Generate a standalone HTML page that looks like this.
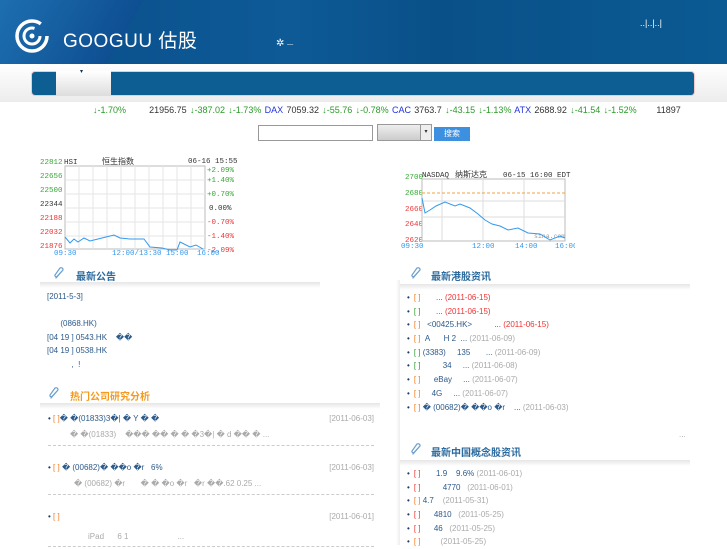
<!DOCTYPE html>
<html><head><meta charset="utf-8"><style>
*{margin:0;padding:0;box-sizing:border-box}
body{width:727px;height:545px;overflow:hidden;background:#fff;font-family:"Liberation Sans","Noto Sans CJK SC",sans-serif;font-size:8px;color:#333;position:relative}
.a{position:absolute;white-space:nowrap}
.hdr{left:0;top:0;width:727px;height:64px;background:linear-gradient(90deg,#0a4e8a 0%,#0d5a97 40%,#0a5088 60%,#0b5a93 100%)}
.sw{left:0;top:0;width:200px;height:64px;background:linear-gradient(120deg,#1d6fb0 0%,#0e4f92 60%,transparent 61%)}
.g{color:#2a9a2a}.r{color:#e33}.b{color:#2233dd}.o{color:#f07a1a}.gr{color:#aaa}.bl{color:#2c5a8a}
.sec{font-size:10px;font-weight:bold;color:#2b6a9e}
.shadow{height:6px;background:linear-gradient(#e6e6e6,#fff)}
ul{list-style:none}
li{height:13.7px;line-height:13.7px;font-size:8px;color:#2c5a8a}
li:before{content:"•";color:#1b3a6a;margin-right:4px}
.dash{border-bottom:1px dashed #ccc}
</style></head><body>
<div class="a hdr"></div>
<div class="a sw"></div>
<svg class="a" style="left:14px;top:18px" width="36" height="36" viewBox="0 0 36 36"><circle cx="18" cy="18" r="15" fill="none" stroke="#fff" stroke-width="3.5" stroke-dasharray="80 15"/><circle cx="18" cy="18" r="8" fill="none" stroke="#fff" stroke-width="3" stroke-dasharray="40 10"/><circle cx="18" cy="18" r="2.5" fill="#fff"/></svg>
<div class="a" style="left:63px;top:26px;color:#fff;font-size:19px;letter-spacing:0.5px">GOOGUU <span style="font-size:19px">估股</span></div>
<div class="a" style="left:276px;top:38px;color:#fff;font-size:10px">✲ <span style="font-size:6px">—</span></div>
<div class="a" style="left:640px;top:18px;color:#fff;font-size:9px">..|..|..|</div>
<div class="a" style="left:0;top:64px;width:727px;height:38px;background:linear-gradient(#fff,#ececec)"></div>
<div class="a" style="left:31px;top:71px;width:664px;height:25px;background:#0c5e93;border-radius:4px;border:1px solid #f3c8c8"></div>
<div class="a" style="left:56px;top:71px;width:55px;height:25px;background:linear-gradient(#fff,#ddd)"></div>
<div class="a" style="left:80px;top:68px;font-size:6px;color:#135">▾</div>
<div class="a" style="left:93px;top:105px;font-size:9px;word-spacing:0.8px">
<span class="g">↓-1.70%</span>&nbsp;&nbsp;&nbsp;&nbsp;&nbsp;&nbsp; 21956.75 <span class="g">↓-387.02 ↓-1.73%</span> <span class="b">DAX</span> 7059.32 <span class="g">↓-55.76 ↓-0.78%</span> <span class="b">CAC</span> 3763.7 <span class="g">↓-43.15 ↓-1.13%</span> <span class="b">ATX</span> 2688.92 <span class="g">↓-41.54 ↓-1.52%</span>&nbsp;&nbsp;&nbsp;&nbsp;&nbsp; 11897</div>
<div class="a" style="left:258px;top:125px;width:115px;height:16px;border:1px solid #999;background:#fff"></div>
<div class="a" style="left:377px;top:124px;width:55px;height:17px;border:1px solid #999;background:linear-gradient(#eee,#ccc)"></div>
<div class="a" style="left:420px;top:125px;width:11px;height:15px;background:#eee;border-left:1px solid #999;font-size:6px;text-align:center;line-height:15px">▾</div>
<div class="a" style="left:434px;top:127px;width:36px;height:14px;background:#3d8fe0;color:#fff;text-align:center;line-height:14px;font-size:8px">搜索</div>
<!-- HSI chart -->
<svg class="a" style="left:40px;top:155px" width="200" height="105" viewBox="0 0 200 105">
<g font-family="Liberation Mono,monospace" font-size="7.5">
<text x="0" y="9" fill="#3a3">22812</text><text x="0" y="23" fill="#3a3">22656</text><text x="0" y="37" fill="#3a3">22500</text><text x="0" y="51" fill="#333">22344</text><text x="0" y="65" fill="#e33">22188</text><text x="0" y="79" fill="#e33">22032</text><text x="0" y="93" fill="#e33">21876</text>
<text x="167" y="17" fill="#3a3">+2.09%</text><text x="167" y="27" fill="#3a3">+1.40%</text><text x="167" y="41" fill="#3a3">+0.70%</text><text x="169" y="55" fill="#333">0.00%</text><text x="167" y="69" fill="#e33">-0.70%</text><text x="167" y="83" fill="#e33">-1.40%</text><text x="167" y="97" fill="#e33">-2.09%</text>
<text x="24" y="9" fill="#333">HSI</text><text x="148" y="8" fill="#333">06-16 15:55</text>
<text x="14" y="100" fill="#39e">09:30</text><text x="72" y="100" fill="#39e">12:00/13:30</text><text x="126" y="100" fill="#39e">15:00</text><text x="157" y="100" fill="#39e">16:00</text>
</g>
<text x="62" y="9" font-size="8" fill="#333">恒生指数</text>
<rect x="25" y="11" width="140" height="83" fill="none" stroke="#bbb"/>
<g stroke="#e5e5e5"><path d="M39 11V94M53 11V94M67 11V94M81 11V94M95 11V94M109 11V94M123 11V94M137 11V94M151 11V94M25 25H165M25 39H165M25 53H165M25 67H165M25 81H165"/></g>
<path d="M25 82 L30 88 L34 84 L38 87 L44 83 L50 86 L58 84 L66 82 L74 80 L80 83 L90 84 L100 84 L104 84 L110 92 L122 93 L130 95 L137 95 L140 87 L150 92 L156 90 L163 94" fill="none" stroke="#39e" stroke-width="1"/>
</svg>
<!-- NASDAQ chart -->
<svg class="a" style="left:400px;top:168px" width="175" height="85" viewBox="0 0 175 85">
<g font-family="Liberation Mono,monospace" font-size="7.5">
<text x="5" y="11" fill="#3a3">2700</text><text x="5" y="27" fill="#3a3">2680</text><text x="5" y="43" fill="#e33">2660</text><text x="5" y="58" fill="#e33">2640</text><text x="5" y="74" fill="#e33">2620</text>
<text x="22" y="9" fill="#333">NASDAQ</text><text x="103" y="9" fill="#333">06-15 16:00 EDT</text>
<text x="1" y="80" fill="#39e">09:30</text><text x="72" y="80" fill="#39e">12:00</text><text x="115" y="80" fill="#39e">14:00</text><text x="155" y="80" fill="#39e">16:00</text>
<text x="134" y="70" fill="#999" font-size="6.5">sina.com</text>
</g>
<text x="55" y="9" font-size="8" fill="#333">纳斯达克</text>
<rect x="22" y="11" width="143" height="62" fill="none" stroke="#bbb"/>
<path d="M42 11V73M83 11V73M124 11V73M22 33H165M22 49H165" stroke="#ddd"/>
<path d="M22 25H165" stroke="#f3a040" stroke-dasharray="3 2"/>
<path d="M22 30 L25 45 L30 42 L36 38 L45 34 L55 38 L60 36 L70 40 L78 46 L85 52 L92 56 L100 58 L108 62 L118 60 L128 65 L140 66 L150 72 L160 68 L165 70" fill="none" stroke="#39e"/>
</svg>
<svg width="0" height="0" style="position:absolute"><defs><symbol id="clip" viewBox="0 0 14 14"><path d="M3 12 L10 4 A2 2 0 0 0 7 2 L2 9 A1.3 1.3 0 0 0 4 10.5 L9 5" fill="none" stroke="#6a9fd0" stroke-width="1.2" stroke-linecap="round"/></symbol></defs></svg>
<!-- left sections -->
<svg class="a" style="left:53px;top:266px" width="14" height="14"><use href="#clip"/></svg>
<div class="a sec" style="left:76px;top:268px">最新公告</div>
<div class="a shadow" style="left:40px;top:282px;width:280px"></div>
<div class="a bl" style="left:47px;top:290px;line-height:13.5px;font-size:8px">[2011-5-3]<br><br>&nbsp;&nbsp;&nbsp;&nbsp;&nbsp;&nbsp;(0868.HK)<br>[04 19 ] 0543.HK &nbsp;&nbsp;&nbsp;��<br>[04 19 ] 0538.HK<br>&nbsp;&nbsp;&nbsp;&nbsp;&nbsp;&nbsp;&nbsp;&nbsp;&nbsp;&nbsp;&nbsp;,&nbsp;&nbsp;!</div>
<svg class="a" style="left:48px;top:386px" width="14" height="14"><use href="#clip"/></svg>
<div class="a sec" style="left:70px;top:388px;color:#f39a1f">热门公司研究分析</div>
<div class="a shadow" style="left:40px;top:403px;width:340px"></div>
<div class="a" style="left:48px;top:414px;width:326px">
 <div style="height:13px"><span style="color:#1b3a6a">•</span> <span class="o">[ ]</span><span class="bl">� �(01833)3�| � Y � �</span><span class="gr" style="float:right">[2011-06-03]</span></div>
 <div class="gr" style="padding-left:22px;height:18px;line-height:16px">� �(01833) &nbsp;&nbsp;&nbsp;��� �� � � �3�| � d �� � ...</div>
 <div class="dash"></div>
 <div style="height:13px;margin-top:17px"><span style="color:#1b3a6a">•</span> <span class="o">[ ]</span> <span class="bl">� (00682)� ��o �r &nbsp;&nbsp;6%</span><span class="gr" style="float:right">[2011-06-03]</span></div>
 <div class="gr" style="padding-left:26px;height:18px;line-height:16px">� (00682) �r &nbsp;&nbsp;&nbsp;&nbsp;&nbsp;&nbsp;� � �o �r &nbsp;&nbsp;�r ��.62 0.25 ...</div>
 <div class="dash"></div>
 <div style="height:13px;margin-top:17px"><span style="color:#1b3a6a">•</span> <span class="o">[ ]</span><span class="gr" style="float:right">[2011-06-01]</span></div>
 <div class="gr" style="padding-left:40px;height:18px;line-height:18px;margin-top:3px">iPad &nbsp;&nbsp;&nbsp;&nbsp;&nbsp;6 1 &nbsp;&nbsp;&nbsp;&nbsp;&nbsp;&nbsp;&nbsp;&nbsp;&nbsp;&nbsp;&nbsp;&nbsp;&nbsp;&nbsp;&nbsp;&nbsp;&nbsp;&nbsp;&nbsp;&nbsp;&nbsp;...</div>
 <div class="dash"></div>
</div>
<!-- right -->
<div class="a" style="left:396px;top:280px;width:4px;height:265px;background:linear-gradient(90deg,#fff,#eee)"></div>
<svg class="a" style="left:410px;top:266px" width="14" height="14"><use href="#clip"/></svg>
<div class="a sec" style="left:431px;top:268px">最新港股资讯</div>
<div class="a shadow" style="left:400px;top:284px;width:290px"></div>
<ul class="a" style="left:407px;top:291px">
<li><span class="o">[ ]</span>&nbsp;&nbsp;&nbsp;&nbsp;&nbsp;&nbsp; ... <span class="r">(2011-06-15)</span></li>
<li><span class="g">[ ]</span>&nbsp;&nbsp;&nbsp;&nbsp;&nbsp;&nbsp; ... <span class="r">(2011-06-15)</span></li>
<li><span class="o">[ ]</span>&nbsp;&nbsp;&nbsp;&lt;00425.HK&gt;&nbsp;&nbsp;&nbsp;&nbsp;&nbsp;&nbsp;&nbsp;&nbsp;&nbsp; ... <span class="r">(2011-06-15)</span></li>
<li><span class="o">[ ]</span>&nbsp;&nbsp;A&nbsp;&nbsp;&nbsp;&nbsp;&nbsp;&nbsp;H 2 &nbsp;... <span class="gr">(2011-06-09)</span></li>
<li><span class="g">[ ]</span> (3383)&nbsp;&nbsp;&nbsp;&nbsp; 135&nbsp;&nbsp;&nbsp;&nbsp;&nbsp;&nbsp; ... <span class="gr">(2011-06-09)</span></li>
<li><span class="g">[ ]</span>&nbsp;&nbsp;&nbsp;&nbsp;&nbsp;&nbsp;&nbsp;&nbsp;&nbsp;&nbsp;34&nbsp;&nbsp;&nbsp;&nbsp; ... <span class="gr">(2011-06-08)</span></li>
<li><span class="o">[ ]</span>&nbsp;&nbsp;&nbsp;&nbsp;&nbsp; eBay&nbsp;&nbsp;&nbsp;&nbsp; ... <span class="gr">(2011-06-07)</span></li>
<li><span class="o">[ ]</span>&nbsp;&nbsp;&nbsp;&nbsp; 4G&nbsp;&nbsp;&nbsp;&nbsp; ... <span class="gr">(2011-06-07)</span></li>
<li><span class="o">[ ]</span> � (00682)� ��o �r&nbsp;&nbsp;&nbsp; ... <span class="gr">(2011-06-03)</span></li>
</ul>
<div class="a gr" style="left:679px;top:430px">...</div>
<svg class="a" style="left:410px;top:442px" width="14" height="14"><use href="#clip"/></svg>
<div class="a sec" style="left:431px;top:444px">最新中国概念股资讯</div>
<div class="a shadow" style="left:400px;top:460px;width:290px"></div>
<ul class="a" style="left:407px;top:467px">
<li><span class="r">[ ]</span>&nbsp;&nbsp;&nbsp;&nbsp;&nbsp;&nbsp; 1.9&nbsp;&nbsp;&nbsp; 9.6% <span class="gr">(2011-06-01)</span></li>
<li><span class="r">[ ]</span>&nbsp;&nbsp;&nbsp;&nbsp;&nbsp;&nbsp;&nbsp;&nbsp;&nbsp; 4770&nbsp;&nbsp; <span class="gr">(2011-06-01)</span></li>
<li><span class="o">[ ]</span> 4.7&nbsp;&nbsp;&nbsp; <span class="gr">(2011-05-31)</span></li>
<li><span class="r">[ ]</span>&nbsp;&nbsp;&nbsp;&nbsp;&nbsp; 4810&nbsp;&nbsp; <span class="gr">(2011-05-25)</span></li>
<li><span class="r">[ ]</span>&nbsp;&nbsp;&nbsp;&nbsp;&nbsp; 46&nbsp;&nbsp; <span class="gr">(2011-05-25)</span></li>
<li><span class="o">[ ]</span>&nbsp;&nbsp;&nbsp;&nbsp;&nbsp;&nbsp;&nbsp;&nbsp; <span class="gr">(2011-05-25)</span></li>
</ul>
</body></html>
